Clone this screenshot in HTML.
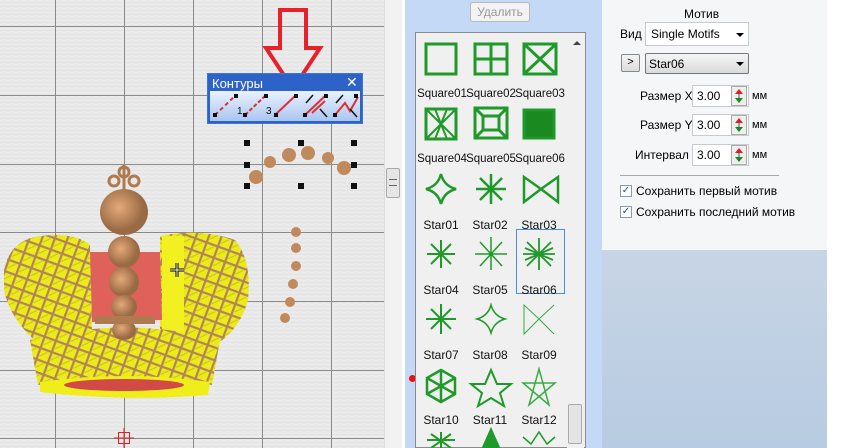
<!DOCTYPE html>
<html><head><meta charset="utf-8"><style>
*{margin:0;padding:0;box-sizing:border-box}
body{width:868px;height:448px;overflow:hidden;position:relative;font-family:"Liberation Sans","DejaVu Sans",sans-serif;font-size:12px;color:#000;background:#fff}
.abs{position:absolute}
.lbl{position:absolute;width:50px;text-align:center;font-size:12px;color:#111}
.inp{position:absolute;background:#fff;border:1px solid #c8ccd2;height:22px}
</style></head><body>
<!-- canvas -->
<div class="abs" style="left:0;top:0;width:384px;height:448px;background:#ebebeb"></div>
<svg class="abs" style="left:0;top:0" width="384" height="448">
<defs>
<pattern id="tx" width="8" height="4" patternUnits="userSpaceOnUse"><path d="M0 3 Q4 1 8 3" stroke="#e2e2e2" fill="none"/></pattern>
<pattern id="cr" width="12" height="12" patternUnits="userSpaceOnUse" patternTransform="rotate(20)"><rect width="12" height="12" fill="#ecea1c"/><path d="M0 0H12M0 0V12" stroke="#b08658" stroke-width="4.5"/><path d="M3 9L9 3" stroke="#c8c410" stroke-width="1"/></pattern>
<radialGradient id="br" cx="40%" cy="40%"><stop offset="0" stop-color="#e4aa7a"/><stop offset="1" stop-color="#9a6a44"/></radialGradient>
</defs>
<rect width="384" height="448" fill="url(#tx)"/>
<g stroke="#8a8a8a" stroke-width="1">
<path d="M55.5 0V448M124.5 0V448M193.5 0V448M262.5 0V448M331.5 0V448M0 26.5H384M0 95.5H384M0 164.5H384M0 232.5H384M0 301.5H384M0 370.5H384M0 438.5H384"/>
</g>
<!-- crown -->
<path d="M4 270 Q10 240 40 236 Q75 232 90 245 L92 330 L40 345 Q10 320 4 290Z" fill="url(#cr)"/>
<path d="M160 236 Q200 228 235 240 Q252 260 248 300 Q240 330 215 345 L160 330Z" fill="url(#cr)"/>
<rect x="162" y="236" width="22" height="100" fill="#f2f020"/>
<path d="M90 252 L160 252 L162 320 L92 322Z" fill="#e0605a"/>
<path d="M30 340 Q125 315 220 340 L212 385 Q125 372 38 385Z" fill="url(#cr)"/>
<path d="M40 382 Q125 370 210 382 L208 395 Q125 402 40 392Z" fill="#f0ee1a"/>
<ellipse cx="124" cy="385" rx="60" ry="6" fill="#d24a46"/>
<ellipse cx="124" cy="212" rx="24" ry="23" fill="url(#br)"/>
<ellipse cx="124" cy="252" rx="16" ry="16" fill="url(#br)"/>
<ellipse cx="124" cy="282" rx="15" ry="15" fill="url(#br)"/>
<ellipse cx="124" cy="307" rx="13" ry="12" fill="url(#br)"/>
<ellipse cx="124" cy="330" rx="12" ry="10" fill="url(#br)"/>
<path d="M95 320 H155" stroke="#b07a50" stroke-width="8"/>
<g fill="none" stroke="#b07a50" stroke-width="3"><circle cx="124" cy="172" r="5"/><circle cx="114" cy="181" r="5"/><circle cx="134" cy="181" r="5"/><path d="M124 165V192"/></g>
<path d="M170 270h14M177 263v14" stroke="#000" stroke-width="3"/><path d="M170 270h14M177 263v14" stroke="#fff" stroke-width="1"/>
<g stroke="#e02020" fill="none"><rect x="118.5" y="432.5" width="11" height="11"/><path d="M124 428V448M114 438H134"/></g>
<g fill="#111"><rect x="244" y="140" width="6" height="6"/><rect x="298" y="140" width="6" height="6"/><rect x="351" y="140" width="6" height="6"/><rect x="244" y="162" width="6" height="6"/><rect x="351" y="162" width="6" height="6"/><rect x="244" y="183" width="6" height="6"/><rect x="298" y="183" width="6" height="6"/><rect x="351" y="183" width="6" height="6"/></g>
<g fill="#c08a5c"><circle cx="256" cy="177" r="7"/><circle cx="270" cy="162" r="6"/><circle cx="289" cy="155" r="7"/><circle cx="308" cy="153" r="7"/><circle cx="328" cy="158" r="6"/><circle cx="344" cy="168" r="7"/>
<circle cx="296" cy="232" r="5"/><circle cx="296" cy="248" r="5"/><circle cx="296" cy="266" r="5"/><circle cx="293" cy="284" r="5"/><circle cx="290" cy="302" r="5"/><circle cx="285" cy="318" r="5"/></g>
<path d="M280 10H306V48H320L293 89L266 48H280Z" fill="none" stroke="#e8202a" stroke-width="4"/>
</svg>
<!-- toolbar -->
<div class="abs" style="left:207px;top:73px;width:156px;height:51px;background:#2d63c8;border:1px solid #3d74d8"></div>
<div class="abs" style="left:212px;top:76px;color:#fff;font-size:13px">Контуры</div>
<div class="abs" style="left:346px;top:74px;color:#fff;font-size:14px;font-weight:bold">✕</div>
<div class="abs" style="left:210px;top:91px;width:150px;height:30px;background:linear-gradient(#eaf2ff,#a9c6f0)"></div>
<svg class="abs" style="left:210px;top:91px" width="150" height="30">
<g stroke-width="2"><path d="M5 24L25 5" stroke="#e03030" stroke-dasharray="4 3"/><path d="M35 24L55 5" stroke="#e03030" stroke-dasharray="4 2"/><path d="M65 24L85 5" stroke="#e03030"/><path d="M95 24L115 5M102 22L115 10" stroke="#e03030"/><path d="M125 24L135 12L140 20L148 6" stroke="#e03030" fill="none"/></g>
<g fill="#111" font-size="10" font-family="Liberation Sans"><text x="27" y="23">1</text><text x="56" y="23">3</text><rect x="3" y="22" width="4" height="4"/><rect x="24" y="3" width="4" height="4"/><rect x="33" y="22" width="4" height="4"/><rect x="54" y="3" width="4" height="4"/><rect x="64" y="22" width="4" height="4"/><rect x="84" y="3" width="4" height="4"/><rect x="93" y="22" width="4" height="4"/><rect x="114" y="3" width="4" height="4"/><rect x="123" y="22" width="4" height="4"/><rect x="144" y="3" width="4" height="4"/></g>
<path d="M96 12L103 4M110 18L117 26M126 12L133 4M140 18L147 26" stroke="#111" stroke-width="1.5"/>
</svg>
<div class="abs" style="left:384px;top:0;width:18px;height:448px;background:#f2f2f2;border-left:1px solid #ddd"></div>
<div class="abs" style="left:386px;top:168px;width:14px;height:30px;background:#e6e6e6;border:1px solid #aaa;border-radius:2px"></div>
<div class="abs" style="left:389px;top:179px;width:8px;height:7px;border-top:1px solid #666;border-bottom:1px solid #666"></div>
<div class="abs" style="left:402px;top:0;width:3px;height:448px;background:#fff"></div>
<div class="abs" style="left:405px;top:0;width:197px;height:448px;background:#c4d9f5"></div>
<div class="abs" style="left:470px;top:2px;width:60px;height:20px;background:#f3f3f3;border:1px solid #b8b8b8;border-radius:3px;color:#999;text-align:center;line-height:18px;font-size:12px">Удалить</div>
<div class="abs" style="left:409px;top:375px;width:7px;height:7px;border-radius:50%;background:#e81010"></div>
<div class="abs" style="left:415px;top:32px;width:171px;height:416px;background:#f0f0f0;border:1px solid #8a8a8a"></div>
<div class="abs" style="left:567px;top:34px;width:17px;height:414px;background:#f0f0f0"></div>
<div class="abs" style="left:573px;top:41px;width:0;height:0;border-left:4px solid transparent;border-right:4px solid transparent;border-bottom:4px solid #444"></div>
<div class="abs" style="left:568px;top:404px;width:14px;height:40px;background:#e4e4e4;border:1px solid #aaa;border-radius:2px"></div>
<div class="abs" style="left:516px;top:229px;width:49px;height:65px;border:1px solid #4a8ee0"></div>
<svg class="abs" style="left:415px;top:32px" width="150" height="416">
<g fill="none" stroke="#1f9a2a" stroke-width="3">
<rect x="11" y="12" width="30" height="30"/>
<rect x="60" y="12" width="32" height="30"/><path d="M76 12V42M60 27H92"/>
<rect x="109" y="12" width="32" height="30"/><path d="M109 12L141 42M141 12L109 42"/>
<rect x="11" y="77" width="30" height="30"/><path d="M11 77L41 107M41 77L11 107M20 77L32 107M32 77L20 107" stroke-width="2"/>
<rect x="60" y="76" width="32" height="30"/><rect x="68" y="84" width="16" height="14"/><path d="M60 76L68 84M92 76L84 84M60 106L68 98M92 106L84 98"/>
<rect x="109" y="78" width="30" height="28" fill="#1a8a20"/>
</g>
<g stroke="#1f9a2a" fill="none" stroke-width="2.5">
<path d="M26 142Q29 154 41 157Q29 160 26 172Q23 160 11 157Q23 154 26 142Z"/>
<path d="M76 142V172M61 157H91M65 146L87 168M87 146L65 168"/>
<path d="M109 145L126 157L109 170ZM143 145L126 157L143 170Z"/>
<path d="M26 208V236M12 222H40M16 212L36 232M36 212L16 232" stroke-width="2"/>
<path d="M76 205V238M60 222H92M65 210L87 234M87 210L65 234" stroke-width="1.5"/>
<path d="M124 206V238M108 222H140M112 210L136 234M136 210L112 234M110 216L138 228M110 228L138 216" stroke-width="1.8"/>
<path d="M26 272V302M11 287H41M16 277L36 297M36 277L16 297" stroke-width="2"/>
<path d="M76 273Q79 284 90 287Q79 290 76 301Q73 290 62 287Q73 284 76 273Z" stroke-width="1.5"/>
<path d="M109 273L124 287L139 273L124 287L139 302L124 287L109 302Z" stroke-width="1" stroke="#3aaa44"/>
<path d="M26 338L40 346V362L26 370L12 362V346Z M26 338V370M12 346L40 362M40 346L12 362"/>
<path d="M76 338L82 352H96L85 361L89 374L76 366L63 374L67 361L56 352H70Z" stroke-width="2"/>
<path d="M124 337L134 373L108 351H140L114 373Z" stroke-width="1.5" stroke="#3aaa44"/>
<path d="M26 400V416M12 408H40M16 402L36 416M36 402L16 416" stroke-width="2"/>
<path d="M76 398L84 416H68Z" fill="#1f9a2a"/>
<path d="M108 405L116 412L124 400L132 412L140 405" stroke-width="1.5"/>
</g>
</svg>
<div class="lbl" style="left:416px;top:88px;width:52px;font-size:11.5px">Square01</div>
<div class="lbl" style="left:465px;top:88px;width:52px;font-size:11.5px">Square02</div>
<div class="lbl" style="left:514px;top:88px;width:52px;font-size:11.5px">Square03</div>
<div class="lbl" style="left:416px;top:153px;width:52px;font-size:11.5px">Square04</div>
<div class="lbl" style="left:465px;top:153px;width:52px;font-size:11.5px">Square05</div>
<div class="lbl" style="left:514px;top:153px;width:52px;font-size:11.5px">Square06</div>
<div class="lbl" style="left:416px;top:218px">Star01</div><div class="lbl" style="left:465px;top:218px">Star02</div><div class="lbl" style="left:514px;top:218px">Star03</div>
<div class="lbl" style="left:416px;top:283px">Star04</div><div class="lbl" style="left:465px;top:283px">Star05</div><div class="lbl" style="left:514px;top:283px">Star06</div>
<div class="lbl" style="left:416px;top:348px">Star07</div><div class="lbl" style="left:465px;top:348px">Star08</div><div class="lbl" style="left:514px;top:348px">Star09</div>
<div class="lbl" style="left:416px;top:413px">Star10</div><div class="lbl" style="left:465px;top:413px">Star11</div><div class="lbl" style="left:514px;top:413px">Star12</div>
<div class="abs" style="left:602px;top:0;width:225px;height:250px;background:#f5f6f8"></div>
<div class="abs" style="left:602px;top:250px;width:225px;height:198px;background:linear-gradient(#c8d5e5,#b7cbe2)"></div>
<div class="abs" style="left:684px;top:7px;font-size:12px">Мотив</div>
<div class="abs" style="left:620px;top:27px">Вид</div>
<div class="inp" style="left:645px;top:22px;width:104px;height:24px;padding:4px 5px">Single Motifs</div>
<div class="abs" style="left:736px;top:33px;border-left:4px solid transparent;border-right:4px solid transparent;border-top:4px solid #000"></div>
<div class="abs" style="left:621px;top:54px;width:19px;height:18px;background:linear-gradient(#f4f4f4,#dcdcdc);border:1px solid #888;border-radius:2px;text-align:center;line-height:15px;font-size:11px">&gt;</div>
<div class="abs" style="left:645px;top:53px;width:104px;height:21px;background:linear-gradient(#f6f6f6,#dadada);border:1px solid #777;border-radius:2px;padding:3px 3px">Star06</div>
<div class="abs" style="left:736px;top:62px;border-left:4px solid transparent;border-right:4px solid transparent;border-top:4px solid #000"></div>
<div class="abs" style="left:640px;top:89px">Размер X</div>
<div class="abs" style="left:640px;top:118px">Размер Y</div>
<div class="abs" style="left:635px;top:148px">Интервал</div>
<div class="inp" style="left:692px;top:85px;width:57px;padding:3px 4px">3.00</div>
<div class="inp" style="left:692px;top:114px;width:57px;padding:3px 4px">3.00</div>
<div class="inp" style="left:692px;top:144px;width:57px;padding:3px 4px">3.00</div>
<svg class="abs" style="left:731px;top:86px" width="17" height="80">
<g><rect x="0.5" y="0.5" width="15" height="19" fill="#eee" stroke="#aaa"/><path d="M8 3L4 8H12Z" fill="#e02020"/><path d="M8 17L4 12H12Z" fill="#1a8a1a"/><path d="M8 7V13" stroke="#555"/></g>
<g transform="translate(0,29)"><rect x="0.5" y="0.5" width="15" height="19" fill="#eee" stroke="#aaa"/><path d="M8 3L4 8H12Z" fill="#e02020"/><path d="M8 17L4 12H12Z" fill="#1a8a1a"/><path d="M8 7V13" stroke="#555"/></g>
<g transform="translate(0,59)"><rect x="0.5" y="0.5" width="15" height="19" fill="#eee" stroke="#aaa"/><path d="M8 3L4 8H12Z" fill="#e02020"/><path d="M8 17L4 12H12Z" fill="#1a8a1a"/><path d="M8 7V13" stroke="#555"/></g>
</svg>
<div class="abs" style="left:752px;top:90px;font-size:11px">мм</div>
<div class="abs" style="left:752px;top:119px;font-size:11px">мм</div>
<div class="abs" style="left:752px;top:149px;font-size:11px">мм</div>
<div class="abs" style="left:620px;top:175px;width:159px;height:1px;background:#a8a8a8"></div>
<div class="abs" style="left:620px;top:185px;width:12px;height:12px;border:1px solid #8a9ab0;background:#fff;font-size:10px;line-height:10px;text-align:center;color:#2a3f9a">✓</div>
<div class="abs" style="left:636px;top:184px">Сохранить первый мотив</div>
<div class="abs" style="left:620px;top:206px;width:12px;height:12px;border:1px solid #8a9ab0;background:#fff;font-size:10px;line-height:10px;text-align:center;color:#2a3f9a">✓</div>
<div class="abs" style="left:636px;top:205px">Сохранить последний мотив</div>
</body></html>
